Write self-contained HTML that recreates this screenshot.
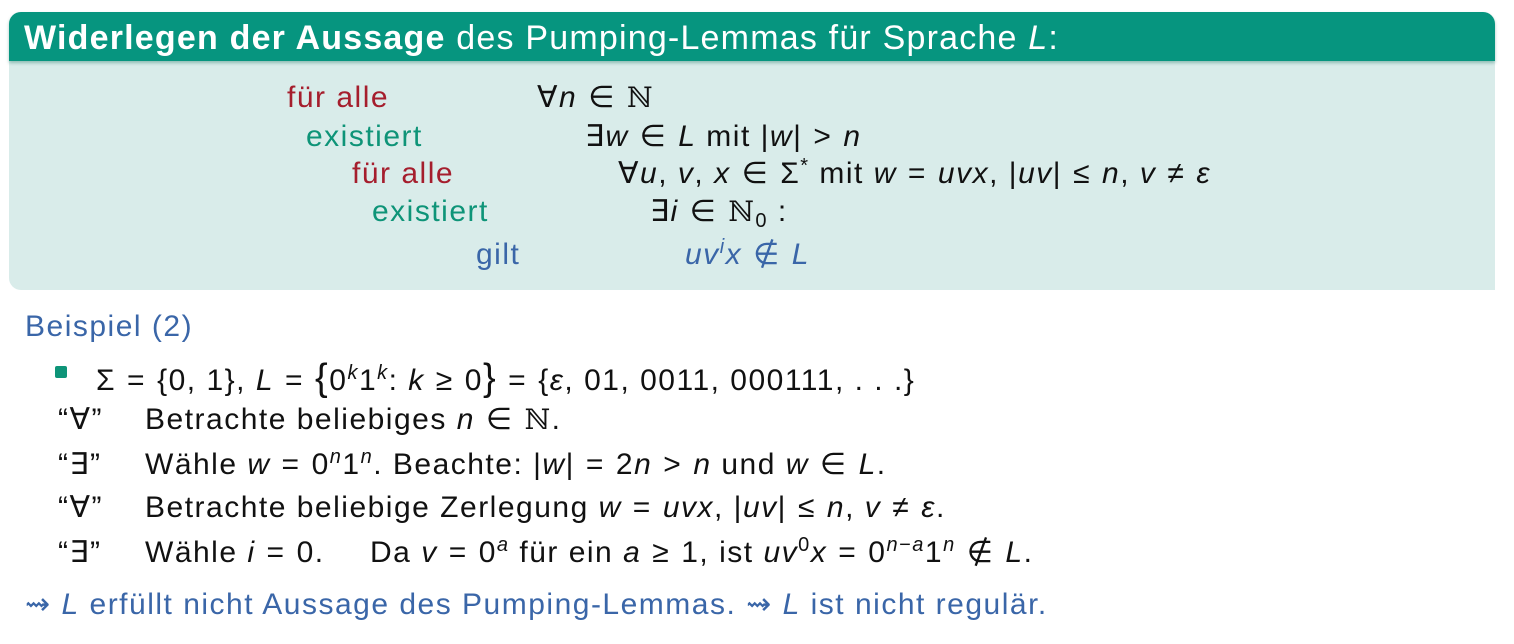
<!DOCTYPE html>
<html><head><meta charset="utf-8"><style>
html,body{margin:0;padding:0;background:#fff;}
body{width:1514px;height:644px;position:relative;overflow:hidden;font-family:"Liberation Sans",sans-serif;font-size:30px;letter-spacing:1.5px;color:#111;}
.box{position:absolute;left:9px;top:12px;width:1486px;height:278px;background:#d9ecea;border-radius:12px 12px 0 12px;}
.hdr{position:absolute;left:9px;top:12px;width:1486px;height:49px;background:#06957f;border-radius:12px 12px 0 0;box-shadow:0 2px 3px rgba(0,100,80,.35);}
.t{position:absolute;white-space:nowrap;line-height:32px;}
.r{color:#a51e2d}.g{color:#0e9478}.b{color:#3a66a8}
i{font-style:italic}
.o{margin:0 11px}
sup{font-size:20px;vertical-align:0;position:relative;top:-11px}
sub{font-size:20px;vertical-align:0;position:relative;top:6px}
.ds{font-family:"DejaVu Serif",serif;font-size:28px}
</style></head><body>
<div class="box"></div>
<div class="hdr"></div>
<div class="t" style="left:24px;top:22px;color:#fff;font-size:34px;letter-spacing:1.2px;"><b>Widerlegen der Aussage</b> des Pumping-Lemmas für Sprache <i>L</i>:</div>

<div class="t r" style="left:287px;top:82px">für alle</div>
<div class="t" style="left:537px;top:82px">∀<i>n</i><span class="o">∈</span><span class="ds">ℕ</span></div>
<div class="t g" style="left:306px;top:121px">existiert</div>
<div class="t" style="left:585px;top:121px">∃<i>w</i><span class="o">∈</span><i>L</i> mit |<i>w</i>|<span class="o">&gt;</span><i>n</i></div>
<div class="t r" style="left:352px;top:158px">für alle</div>
<div class="t" style="left:618px;top:158px">∀<i>u</i>,&nbsp;<i>v</i>,&nbsp;<i>x</i><span class="o">∈</span>Σ<sup>*</sup> mit <i>w</i><span class="o">=</span><i>uvx</i>,&nbsp;|<i>uv</i>|<span class="o">≤</span><i>n</i>,&nbsp;<i>v</i><span class="o">≠</span><i>ε</i></div>
<div class="t g" style="left:372px;top:196px">existiert</div>
<div class="t" style="left:650px;top:196px">∃<i>i</i><span class="o">∈</span><span class="ds">ℕ</span><sub>0</sub> :</div>
<div class="t b" style="left:476px;top:239px">gilt</div>
<div class="t b" style="left:685px;top:239px"><i>uv<sup>i</sup>x</i><span class="o">∉</span><i>L</i></div>

<div class="t b" style="left:25px;top:311px">Beispiel (2)</div>
<div style="position:absolute;left:55px;top:366px;width:12px;height:12px;background:#0e9478;border-radius:2px"></div>
<div class="t" style="left:96px;top:362px">Σ<span class="o">=</span>{0,&nbsp;1},&nbsp;<i>L</i><span class="o">=</span><span style="font-size:38px">{</span>0<sup><i>k</i></sup>1<sup><i>k</i></sup>:&nbsp;<i>k</i><span class="o">≥</span>0<span style="font-size:38px">}</span><span class="o">=</span>{<i>ε</i>,&nbsp;01,&nbsp;0011,&nbsp;000111,&nbsp;.&nbsp;.&nbsp;.}</div>
<div class="t" style="left:58px;top:404px">“∀”</div>
<div class="t" style="left:145px;top:404px">Betrachte beliebiges <i>n</i><span class="o">∈</span><span class="ds">ℕ</span>.</div>
<div class="t" style="left:58px;top:449px">“∃”</div>
<div class="t" style="left:145px;top:449px">Wähle <i>w</i><span class="o">=</span>0<sup><i>n</i></sup>1<sup><i>n</i></sup>. Beachte: |<i>w</i>|<span class="o">=</span>2<i>n</i><span class="o">&gt;</span><i>n</i> und <i>w</i><span class="o">∈</span><i>L</i>.</div>
<div class="t" style="left:58px;top:492px">“∀”</div>
<div class="t" style="left:145px;top:492px">Betrachte beliebige Zerlegung <i>w</i><span class="o">=</span><i>uvx</i>,&nbsp;|<i>uv</i>|<span class="o">≤</span><i>n</i>,&nbsp;<i>v</i><span class="o">≠</span><i>ε</i>.</div>
<div class="t" style="left:58px;top:537px">“∃”</div>
<div class="t" style="left:145px;top:537px">Wähle <i>i</i><span class="o">=</span>0.</div>
<div class="t" style="left:370px;top:537px">Da <i>v</i><span class="o">=</span>0<sup><i>a</i></sup> für ein <i>a</i><span class="o">≥</span>1, ist <i>uv</i><sup>0</sup><i>x</i><span class="o">=</span>0<sup><i>n</i>−<i>a</i></sup>1<sup><i>n</i></sup><span class="o">∉</span><i>L</i>.</div>
<div class="t b" style="left:25px;top:589px">⇝ <i>L</i> erfüllt nicht Aussage des Pumping-Lemmas. ⇝ <i>L</i> ist nicht regulär.</div>
</body></html>
